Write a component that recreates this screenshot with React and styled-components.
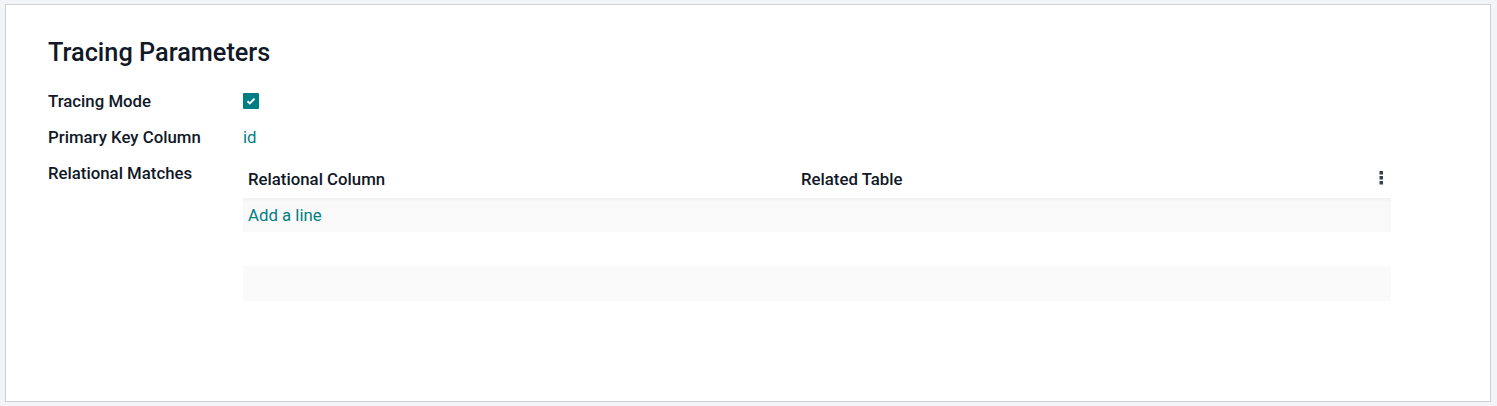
import React from "react";
import styled, { createGlobalStyle } from "styled-components";

const GlobalStyle = createGlobalStyle`
  html, body {
    margin: 0;
    padding: 0;
    background: #f3f4f7;
    font-family: Roboto, "Noto Sans", "Liberation Sans", sans-serif;
    color: #111827;
  }
`;

const Page = styled.div`
  width: 1497px;
  height: 406px;
  box-sizing: border-box;
  padding: 4px 6px 4px 5px;
`;

const Sheet = styled.div`
  height: 100%;
  box-sizing: border-box;
  background: #fff;
  border: 1px solid #cfd0d4;
  padding: 33px 99px 0 42px;
`;

const Title = styled.h2`
  margin: 0 0 22px;
  font-size: 25.3px;
  font-weight: 500;
  line-height: 30px;
  color: #111827;
`;

const Grid = styled.div`
  display: grid;
  grid-template-columns: 195px 1fr;
  row-gap: 14px;
  align-items: start;
`;

const Label = styled.div`
  font-size: 16.8px;
  font-weight: 500;
  line-height: 22px;
  color: #111827;
`;

const Value = styled.div`
  font-size: 16.8px;
  line-height: 22px;
  color: #017e84;
  min-height: 22px;
  display: flex;
  align-items: center;
`;

const Check = styled.span`
  width: 16px;
  height: 16px;
  border-radius: 1px;
  background: #017e84;
  display: inline-flex;
  align-items: center;
  justify-content: center;
`;

const Table = styled.table`
  width: 100%;
  border-collapse: collapse;
  margin-top: -2px;
  font-size: 16.8px;
`;

const Th = styled.th`
  text-align: left;
  font-weight: 500;
  color: #111827;
  height: 38px;
  padding: 0 5px;
  width: ${p => p.w || "auto"};
`;

const Row = styled.tr`
  height: ${p => p.h || 34}px;
  background: ${p => (p.striped ? "#fafafa" : "#fff")};
`;

const AddRow = styled.tr`
  height: 34px;
  background: #f9f9f9;
  box-shadow: inset 0 3px 4px -2px rgba(0, 0, 0, 0.06);
`;

const Td = styled.td`
  padding: 0 5px;
  color: #017e84;
`;

const Kebab = styled.th`
  width: 20px;
  text-align: right;
  padding: 0 8px 0 0;
  vertical-align: middle;
`;

export default function App() {
  return (
    <>
      <GlobalStyle />
      <Page>
        <Sheet>
          <Title>Tracing Parameters</Title>
          <Grid>
            <Label>Tracing Mode</Label>
            <Value>
              <Check>
                <svg width="10" height="8" viewBox="0 0 10 8">
                  <path d="M1.5 4.3 L3.8 6.4 L8.5 1.6" stroke="#fff" strokeWidth="2" fill="none" />
                </svg>
              </Check>
            </Value>
            <Label>Primary Key Column</Label>
            <Value>id</Value>
            <Label>Relational Matches</Label>
            <Table>
              <thead>
                <tr>
                  <Th w="543px">Relational Column</Th>
                  <Th>Related Table</Th>
                  <Kebab>
                    <svg width="4" height="14" viewBox="0 0 4 14">
                      <rect x="0.5" y="0" width="3.5" height="3.5" fill="#374151" />
                      <rect x="0.5" y="5" width="3.5" height="3.5" fill="#374151" />
                      <rect x="0.5" y="10" width="3.5" height="3.5" fill="#374151" />
                    </svg>
                  </Kebab>
                </tr>
              </thead>
              <tbody>
                <AddRow>
                  <Td colSpan={3}>Add a line</Td>
                </AddRow>
                <Row>
                  <Td colSpan={3} />
                </Row>
                <Row striped h={35}>
                  <Td colSpan={3} />
                </Row>
              </tbody>
            </Table>
          </Grid>
        </Sheet>
      </Page>
    </>
  );
}
